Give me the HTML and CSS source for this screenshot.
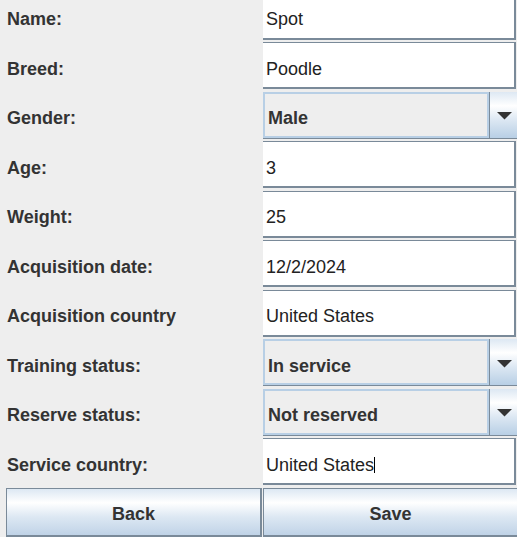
FILE: index.html
```html
<!DOCTYPE html>
<html>
<head>
<meta charset="utf-8">
<link rel="stylesheet" href="styles.css">
</head>
<body>
<div class="form">
  <div class="label">Name:</div><div class="text">Spot</div>
  <div class="label">Breed:</div><div class="text">Poodle</div>
  <div class="label">Gender:</div>
  <div class="combo"><div class="display">Male</div><div class="arrow"><svg width="15" height="8" viewBox="0 0 15 8"><polygon points="0,0 15,0 7.5,7.5" fill="#333"/></svg></div></div>
  <div class="label">Age:</div><div class="text">3</div>
  <div class="label">Weight:</div><div class="text">25</div>
  <div class="label">Acquisition date:</div><div class="text">12/2/2024</div>
  <div class="label">Acquisition country</div><div class="text">United States</div>
  <div class="label">Training status:</div>
  <div class="combo"><div class="display">In service</div><div class="arrow"><svg width="15" height="8" viewBox="0 0 15 8"><polygon points="0,0 15,0 7.5,7.5" fill="#333"/></svg></div></div>
  <div class="label">Reserve status:</div>
  <div class="combo"><div class="display">Not reserved</div><div class="arrow"><svg width="15" height="8" viewBox="0 0 15 8"><polygon points="0,0 15,0 7.5,7.5" fill="#333"/></svg></div></div>
  <div class="label">Service country:</div><div class="text">United States<span class="caret"></span></div>
  <div class="btn back">Back</div><div class="btn save">Save</div>
</div>
</body>
</html>
```
FILE: styles.css
```css
html, body {
  margin: 0;
  padding: 0;
  background: #eeeeee;
  overflow: hidden;
  height: 537px;
}
.form {
  display: grid;
  grid-template-columns: 257px 256px;
  grid-template-rows: repeat(10, 47px) 49px;
  row-gap: 2.5px;
  margin-top: -7.5px;
  padding-left: 6px;
  font-family: "Liberation Sans", Arial, sans-serif;
  font-size: 18px;
}
.label {
  display: flex;
  align-items: center;
  padding: 7px 0 0 1px;
  font-weight: bold;
  color: #333333;
  white-space: nowrap;
}
.text {
  display: flex;
  align-items: center;
  box-sizing: border-box;
  background: #ffffff;
  border-top: 1px solid #7a8a99;
  border-right: 2px solid #7a8a99;
  border-bottom: 2px solid #7a8a99;
  margin-right: 3px;
  padding: 8px 0 0 3px;
  color: #222222;
  white-space: nowrap;
}
.caret {
  display: inline-block;
  width: 1px;
  height: 16px;
  background: #000000;
  vertical-align: -2px;
}
.combo {
  display: flex;
  box-sizing: border-box;
  border-bottom: 1px solid #7a8a99;
}
.display {
  width: 226px;
  box-sizing: border-box;
  display: flex;
  align-items: center;
  background: #eeeeee;
  border: 2px solid #b8cfe5;
  padding: 8px 0 0 3px;
  font-weight: bold;
  color: #333333;
  white-space: nowrap;
}
.arrow {
  flex: 1;
  display: flex;
  align-items: center;
  border-left: 1px solid #7a8a99;
  padding: 3px 0 0 7px;
  background: linear-gradient(#dde8f3 0%, #ffffff 30%, #dde8f3 60%, #b8cfe5 100%);
}
.arrow svg {
  display: block;
}
.btn {
  display: flex;
  align-items: center;
  justify-content: center;
  box-sizing: border-box;
  border: 1px solid #7a8a99;
  border-right-width: 2px;
  border-bottom-width: 2px;
  padding-top: 6px;
  background: linear-gradient(#dde8f3 0%, #ffffff 30%, #dde8f3 60%, #c0d3e7 100%);
  font-weight: bold;
  color: #333333;
}
.back {
  margin-right: 1px;
}
```
